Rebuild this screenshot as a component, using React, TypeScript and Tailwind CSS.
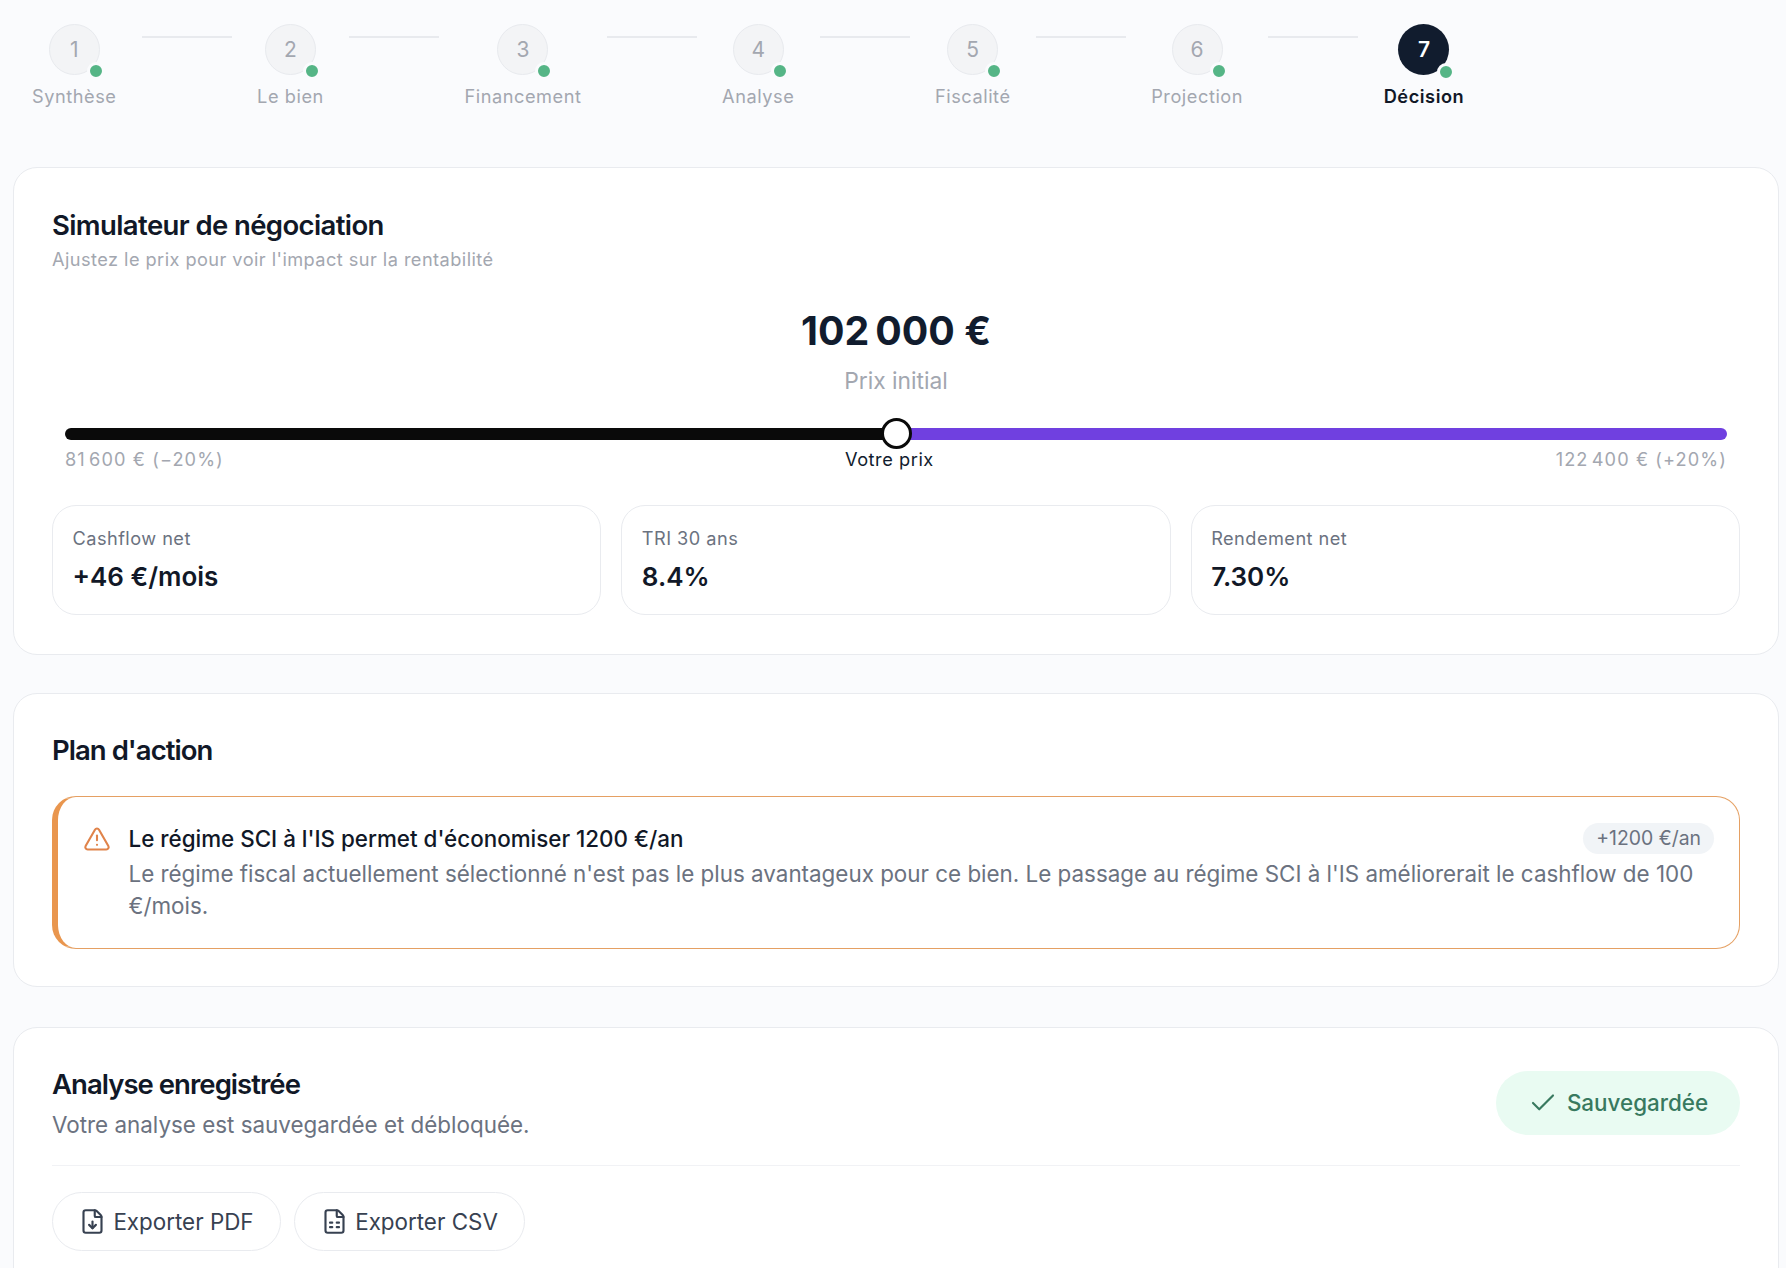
import type { ReactNode } from "react";
import { Check, FileDown, FileSpreadsheet, TriangleAlert } from "lucide-react";

const steps = ["Synthèse", "Le bien", "Financement", "Analyse", "Fiscalité", "Projection", "Décision"];

function Step({ n, label, active }: { n: number; label: string; active: boolean }) {
  return (
    <div className="flex flex-col items-center">
      <div
        className={
          active
            ? "relative flex h-[51px] w-[51px] items-center justify-center rounded-full bg-[#111c2e] text-[21px] font-semibold text-white"
            : "relative flex h-[51px] w-[51px] items-center justify-center rounded-full border border-[#e8eaee] bg-[#f3f4f6] text-[21px] text-[#a3a7b0]"
        }
      >
        {n}
        <span className="absolute -bottom-[6px] -right-[6px] h-[18px] w-[18px] rounded-full border-[3px] border-[#fafbfd] bg-[#55b586]" />
      </div>
      <span
        className={
          active
            ? "mt-[7px] text-[18.2px] leading-[28px] font-semibold tracking-[0.03em] text-[#111827]"
            : "mt-[7px] text-[18.2px] leading-[28px] tracking-[0.03em] text-[#a3a7b0]"
        }
      >
        {label}
      </span>
    </div>
  );
}

function Metric({ label, value }: { label: string; value: string }) {
  return (
    <div className="flex h-[110px] flex-col rounded-[24px] border border-[#e9ebef] bg-white px-[19.5px] pt-[18px]">
      <span className="text-[18.2px] leading-[28px] tracking-[0.025em] text-[#6b7280]">{label}</span>
      <span className="mt-[7px] text-[26px] leading-[36px] font-semibold text-[#111827]">{value}</span>
    </div>
  );
}

function ExportButton({ icon, label, width }: { icon: ReactNode; label: string; width: string }) {
  return (
    <button className={`flex h-[59px] items-center justify-center gap-[7px] rounded-full border border-[#e9ebef] bg-white text-[22.4px] text-[#374151] ${width}`}>
      {icon}
      {label}
    </button>
  );
}

export default function App() {
  return (
    <div className="h-[1268px] overflow-hidden bg-[#fafbfd] pl-[13px] pr-[7px] font-['Inter',sans-serif]">
      <div className="flex items-start gap-[25.3px] pl-[19px] pt-[24px]">
        {steps.map((label, i) => (
          <div key={label} className="contents">
            <Step n={i + 1} label={label} active={i === 6} />
            {i < 6 && <div className="mt-[12px] h-[2px] w-[90px] bg-[#e8eaee]" />}
          </div>
        ))}
      </div>

      <section className="mt-[57px] h-[488px] rounded-[24px] border border-[#e9ebef] bg-white px-[38px] pt-[37px]">
        <h2 className="text-[27.5px] leading-[40px] font-semibold tracking-[-0.022em] text-[#111827]">Simulateur de négociation</h2>
        <p className="text-[18.2px] leading-[28px] tracking-[0.024em] text-[#a3a7b0]">Ajustez le prix pour voir l'impact sur la rentabilité</p>

        <div className="mt-[31px] flex flex-col items-center">
          <span className="text-[39.3px] leading-[54px] font-bold text-[#111c2e]">{"102\u202f000 €"}</span>
          <span className="mt-[6px] text-[22.8px] leading-[34px] text-[#a3a7b0]">Prix initial</span>
        </div>

        <div className="relative mx-[13px] mt-[30px] flex h-[12px]">
          <div className="h-full w-[831px] rounded-l-full bg-[#0a0a0a]" />
          <div className="h-full flex-1 rounded-r-full bg-[#7040e0]" />
          <div className="absolute left-[815.5px] -top-[10px] h-[31px] w-[31px] rounded-full border-[3.5px] border-[#0a0a0a] bg-white" />
        </div>
        <div className="relative mx-[13px] mt-[5px] flex justify-between text-[18.2px] leading-[28px] text-[#a3a7b0]">
          <span className="tracking-[0.06em]">
            <span className="[word-spacing:-3px]">81 600</span> € (−20%)
          </span>
          <span className="absolute left-[780px] tracking-[0.03em] text-[#111c2e]">Votre prix</span>
          <span className="tracking-[0.06em]">
            <span className="[word-spacing:-3px]">122 400</span> € (+20%)
          </span>
        </div>

        <div className="mt-[32px] grid grid-cols-3 gap-[20px]">
          <Metric label="Cashflow net" value="+46 €/mois" />
          <Metric label="TRI 30 ans" value="8.4%" />
          <Metric label="Rendement net" value="7.30%" />
        </div>
      </section>

      <section className="mt-[38px] h-[294px] rounded-[24px] border border-[#e9ebef] bg-white px-[38px] pt-[35px]">
        <h2 className="text-[27.5px] leading-[42px] font-semibold tracking-[-0.035em] text-[#111827]">Plan d'action</h2>
        <div className="mt-[25px] flex h-[153px] gap-[17.5px] rounded-[24px] border border-l-[6px] border-[#e5a063] border-l-[#e9964e] bg-white pl-[25px] pr-[25px] pt-[26px]">
          <TriangleAlert className="mt-[2px] h-[28px] w-[28px] shrink-0 text-[#e0834a]" strokeWidth={1.8} />
          <div className="min-w-0 flex-1">
            <div className="flex items-center justify-between">
              <span className="text-[22.4px] leading-[30px] font-medium text-[#111827]">Le régime SCI à l'IS permet d'économiser 1200 €/an</span>
              <span className="flex h-[31px] items-center rounded-full bg-[#f1f4f7] px-[13px] text-[19.4px] text-[#6b7280]">+1200 €/an</span>
            </div>
            <p className="mt-[4px] text-[22.4px] leading-[32px] text-[#6b7280]">
              Le régime fiscal actuellement sélectionné n'est pas le plus avantageux pour ce bien. Le passage au régime SCI à l'IS améliorerait le cashflow de 100 €/mois.
            </p>
          </div>
        </div>
      </section>

      <section className="mt-[40px] h-[300px] rounded-[24px] border border-[#e9ebef] bg-white px-[38px] pt-[35px]">
        <div className="flex items-center justify-between border-b border-[#f1f2f5] pb-[23px]">
          <div>
            <h2 className="text-[27.5px] leading-[42px] font-semibold tracking-[-0.035em] text-[#111827]">Analyse enregistrée</h2>
            <p className="mt-[3px] text-[22.4px] leading-[34px] text-[#6b7280]">Votre analyse est sauvegardée et débloquée.</p>
          </div>
          <div className="flex h-[64px] w-[244px] items-center justify-center gap-[9px] rounded-full bg-[#e9fbf2] text-[22.4px] font-medium text-[#38795f]">
            <Check className="h-[30px] w-[30px]" strokeWidth={1.7} />
            Sauvegardée
          </div>
        </div>
        <div className="mt-[26px] flex gap-[13px]">
          <ExportButton icon={<FileDown className="h-[27px] w-[27px]" strokeWidth={1.9} />} label="Exporter PDF" width="w-[229px]" />
          <ExportButton icon={<FileSpreadsheet className="h-[27px] w-[27px]" strokeWidth={1.9} />} label="Exporter CSV" width="w-[231px]" />
        </div>
      </section>
    </div>
  );
}
